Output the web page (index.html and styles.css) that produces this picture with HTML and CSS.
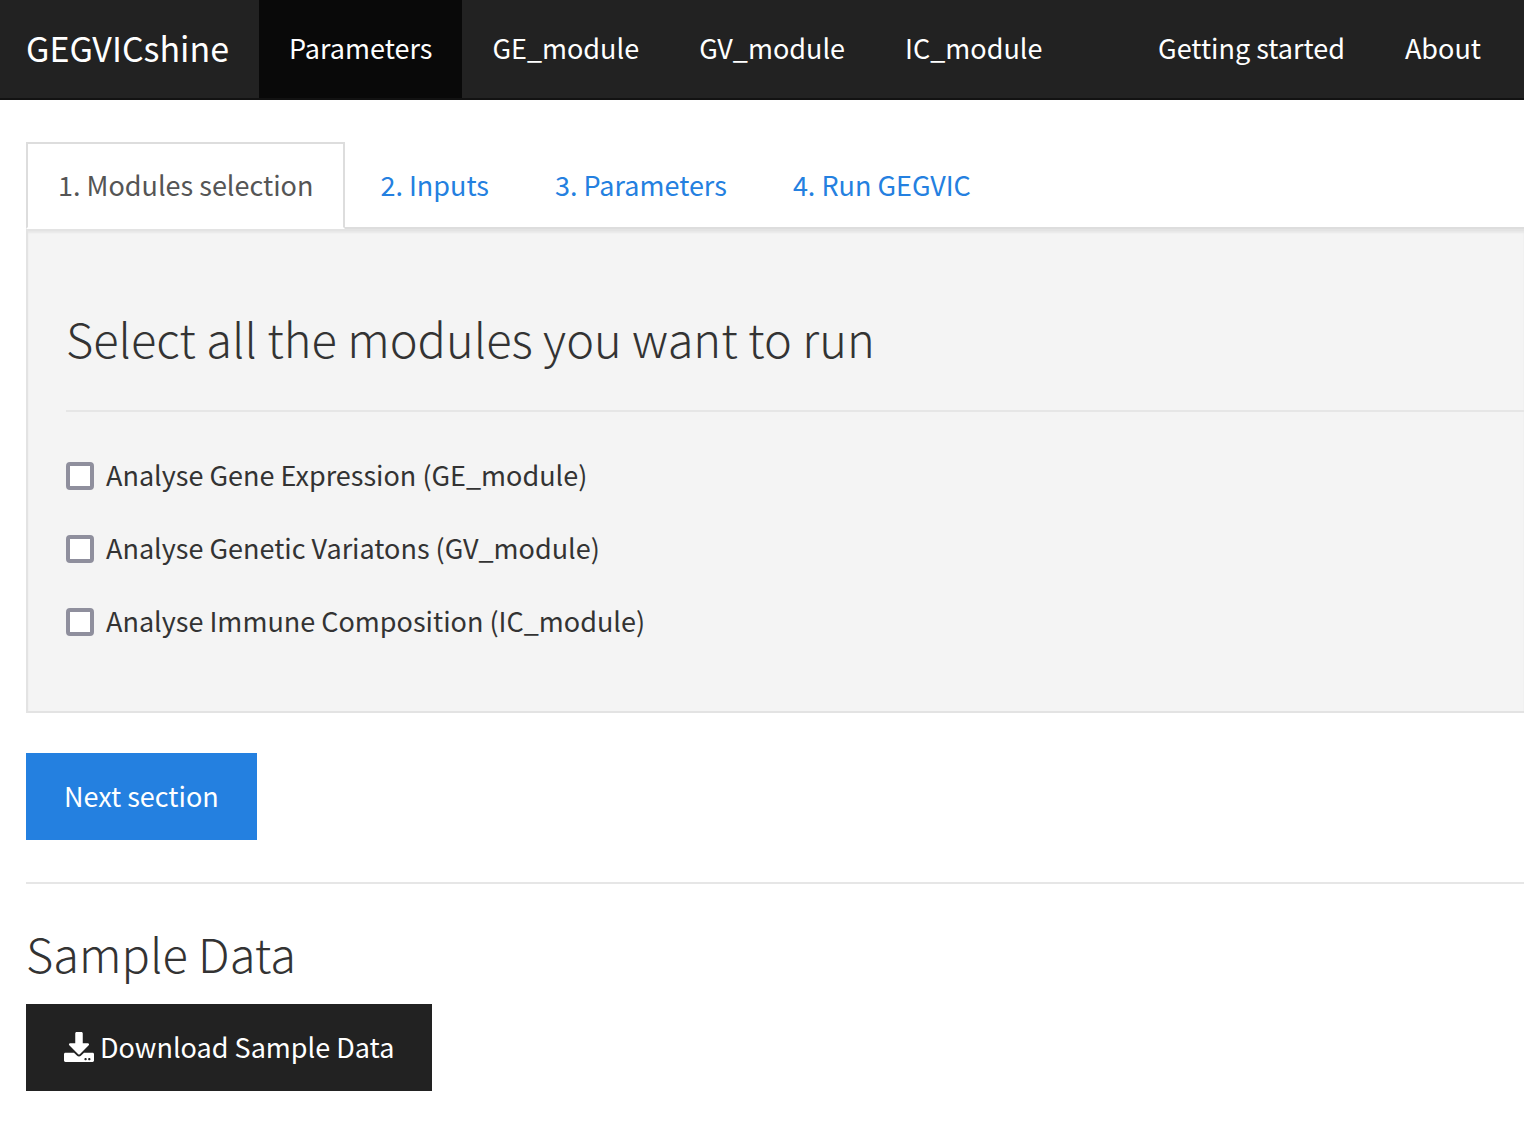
FILE: index.html
```html
<!DOCTYPE html>
<html lang="en">
<head>
<meta charset="utf-8">
<title>GEGVICshine</title>
<meta name="viewport" content="width=device-width, initial-scale=1">
<link rel="stylesheet" href="styles.css">
</head>
<body>
<header class="navbar">
  <a class="brand" href="#">GEGVICshine</a>
  <nav class="nav">
    <a class="nav-link active" href="#parameters">Parameters</a>
    <a class="nav-link" href="#ge">GE_module</a>
    <a class="nav-link" href="#gv">GV_module</a>
    <a class="nav-link" href="#ic">IC_module</a>
  </nav>
  <nav class="nav nav-right">
    <a class="nav-link" href="#start">Getting started</a>
    <a class="nav-link" href="#about">About</a>
  </nav>
</header>
<main class="content">
  <nav class="tabs">
    <a class="tab active" href="#modules">1. Modules selection</a>
    <a class="tab" href="#inputs">2. Inputs</a>
    <a class="tab" href="#params">3. Parameters</a>
    <a class="tab" href="#run">4. Run GEGVIC</a>
  </nav>
  <section class="well">
    <h2 class="title">Select all the modules you want to run</h2>
    <hr class="rule">
    <div class="checks">
      <label class="check"><input class="box" type="checkbox"><span class="check-text">Analyse Gene Expression (GE_module)</span></label>
      <label class="check"><input class="box" type="checkbox"><span class="check-text">Analyse Genetic Variatons (GV_module)</span></label>
      <label class="check"><input class="box" type="checkbox"><span class="check-text">Analyse Immune Composition (IC_module)</span></label>
    </div>
  </section>
  <button class="btn btn-primary" type="button">Next section</button>
  <hr class="rule">
  <h2 class="title">Sample Data</h2>
  <button class="btn btn-dark" type="button">
    <svg class="icon" viewBox="0 0 512 512" aria-hidden="true"><path fill="currentColor" d="M216 0h80c13.300 0 24 10.700 24 24v168h87.700c17.800 0 26.700 21.500 14.100 34.100L269.700 378.300c-7.500 7.500-19.800 7.500-27.300 0L90.100 226.100c-12.600-12.600-3.700-34.100 14.100-34.100H192V24c0-13.300 10.700-24 24-24zm296 376v112c0 13.300-10.700 24-24 24H24c-13.300 0-24-10.700-24-24V376c0-13.300 10.700-24 24-24h146.700l49 49c20.100 20.100 52.500 20.100 72.600 0l49-49H488c13.300 0 24 10.700 24 24zm-124 88c0-11-9-20-20-20s-20 9-20 20 9 20 20 20 20-9 20-20zm64 0c0-11-9-20-20-20s-20 9-20 20 9 20 20 20 20-9 20-20z"/></svg>
    Download Sample Data
  </button>
</main>
</body>
</html>
```
FILE: styles.css
```css
* {
  box-sizing: border-box;
}

body {
  margin: 0;
  background: #fff;
  color: #333;
  font-family: "Noto Sans CJK JP", "Noto Sans CJK SC", sans-serif;
  font-size: 27px;
  font-weight: 400;
  line-height: 42px;
  overflow-x: hidden;
}

a {
  color: inherit;
  text-decoration: none;
}

.navbar {
  display: flex;
  background: #222;
  border-bottom: 2px solid #121212;
  color: #fff;
  white-space: nowrap;
}

.brand {
  padding: 27px 30px 29px 26px;
  font-size: 34px;
}

.nav {
  display: flex;
}

.nav-right {
  margin-left: auto;
  padding-right: 13px;
}

.nav-link {
  padding: 27px 30px 29px;
}

.nav-link.active {
  background: #090909;
}

.content {
  padding: 42px 0 30px 26px;
}

.tabs {
  display: flex;
  gap: 4px;
  border-bottom: 2px solid #ddd;
  color: #2480e0;
}

.tab {
  padding: 22px 31px 21px;
}

.tab.active {
  margin-bottom: -2px;
  padding: 20px 30px 21px;
  border: 2px solid #ddd;
  border-bottom-color: #fff;
  background: #fff;
  color: #555;
}

.well {
  padding: 81px 0 68px 38px;
  background: #f4f4f4;
  border: 2px solid #e3e3e3;
  border-right: 0;
  box-shadow: inset 0 2px 2px rgba(0, 0, 0, 0.05);
}

.title {
  margin: 0;
  padding-bottom: 4px;
  font-size: 47px;
  font-weight: 300;
  line-height: 52px;
}

.rule {
  height: 2px;
  margin: 42px 0 43px;
  border: 0;
  background: #e6e6e6;
}

.checks {
  display: grid;
  gap: 31px;
}

.check {
  display: flex;
  align-items: center;
  height: 42px;
  gap: 12px;
}

.check-text {
  padding-bottom: 2px;
}

.box {
  appearance: none;
  width: 28px;
  height: 28px;
  margin: 0;
  border: 4px solid #8f8f9d;
  border-radius: 4px;
  background: #fff;
}

.btn {
  display: flex;
  align-items: center;
  gap: 6px;
  height: 87px;
  padding: 0 38px 2px;
  border: 0;
  color: #fff;
  font: inherit;
}

.btn-primary {
  margin-top: 40px;
  background: #2480e0;
}

.btn-dark {
  margin-top: 21px;
  background: #222;
}

.icon {
  width: 30px;
  height: 30px;
}
```
